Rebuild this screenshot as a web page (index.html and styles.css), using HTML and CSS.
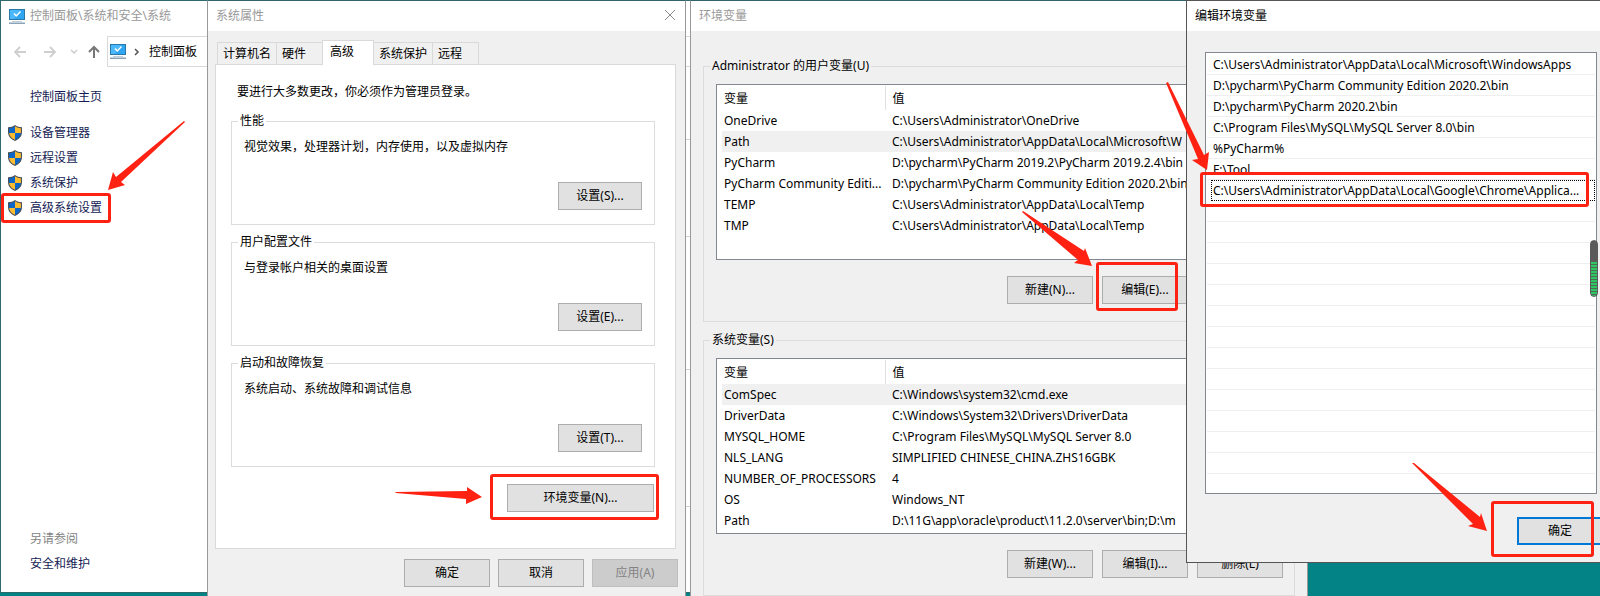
FILE: index.html
```
<!DOCTYPE html>
<html lang="zh-CN">
<head>
<meta charset="utf-8">
<title>环境变量</title>
<link rel="stylesheet" href="styles.css">
</head>
<body>
<svg class="defs" aria-hidden="true">
  <symbol id="monitor" viewBox="0 0 16 15">
    <rect x="0" y="0" width="16" height="11" fill="#2a78a8"/>
    <rect x="1" y="1" width="14" height="9" fill="#2ea6f2"/>
    <path d="M1 10V1H11L5 10Z" fill="#4ab8fa"/>
    <path d="M5 4.500L7.300 7L11.500 2.500" fill="none" stroke="#fff" stroke-width="1.500"/>
    <rect x="3" y="12" width="10" height="1" fill="#c3d0da"/>
    <rect x="0" y="13.500" width="16" height="1.500" fill="#8aa3b8"/>
  </symbol>
  <symbol id="shield" viewBox="0 0 14 16">
    <path d="M7 0C5 1.500 3 2.200 0 2.300V7C0 11.500 3 14.300 7 16C11 14.300 14 11.500 14 7V2.300C11 2.200 9 1.500 7 0Z" fill="#4a5058"/>
    <path d="M7 1.300C5.200 2.500 3.500 3.100 1.100 3.300V8H7Z" fill="#0b66c8"/>
    <path d="M7 1.300C8.800 2.500 10.500 3.100 12.900 3.300V8H7Z" fill="#fdbb30"/>
    <path d="M1.100 8C1.500 11.500 4 13.500 7 14.800V8Z" fill="#fdbb30"/>
    <path d="M12.900 8C12.500 11.500 10 13.500 7 14.800V8Z" fill="#0b66c8"/>
  </symbol>
</svg>
<main class="desktop">
  <section class="window control-panel">
    <header class="titlebar with-icon"><svg class="pc"><use href="#monitor"/></svg>控制面板\系统和安全\系统</header>
    <nav class="navbar">
      <svg class="nav-arrows" viewBox="0 0 92 16" fill="none">
        <path d="M13 8H2M7 3L2 8L7 13" stroke="#cfcfcf" stroke-width="1.800"/>
        <path d="M31 8H42M37 3L42 8L37 13" stroke="#cfcfcf" stroke-width="1.800"/>
        <path d="M58 6L61 9L64 6" stroke="#cbcbcb" stroke-width="1.500"/>
        <path d="M81 14V3M76 8L81 3L86 8" stroke="#777" stroke-width="2"/>
      </svg>
      <div class="address"><svg class="pc"><use href="#monitor"/></svg><svg class="chev" viewBox="0 0 6 8"><path d="M1 1L4 4L1 7" fill="none" stroke="#555" stroke-width="1.500"/></svg>控制面板</div>
    </nav>
    <div class="panel-body">
      <div class="side">
        <a class="home" href="#">控制面板主页</a>
        <a href="#"><svg><use href="#shield"/></svg>设备管理器</a>
        <a href="#"><svg><use href="#shield"/></svg>远程设置</a>
        <a href="#"><svg><use href="#shield"/></svg>系统保护</a>
        <a href="#"><svg><use href="#shield"/></svg>高级系统设置</a>
        <div class="see-also"><span>另请参阅</span><a href="#">安全和维护</a></div>
      </div>
      <div class="sections"><div></div><div></div><div></div><div></div></div>
    </div>
  </section>

  <section class="window properties">
    <header class="titlebar">系统属性
      <button class="close" aria-label="关闭"><svg viewBox="0 0 12 12"><path d="M1 1L11 11M11 1L1 11" stroke="#8a8a8a"/></svg></button>
    </header>
    <div class="tabs">
      <button>计算机名</button><button>硬件</button><button class="active">高级</button><button>系统保护</button><button>远程</button>
    </div>
    <div class="tab-panel">
      <p class="note">要进行大多数更改，你必须作为管理员登录。</p>
      <fieldset class="group"><legend>性能</legend><p>视觉效果，处理器计划，内存使用，以及虚拟内存</p><button class="btn">设置(S)...</button></fieldset>
      <fieldset class="group"><legend>用户配置文件</legend><p>与登录帐户相关的桌面设置</p><button class="btn">设置(E)...</button></fieldset>
      <fieldset class="group"><legend>启动和故障恢复</legend><p>系统启动、系统故障和调试信息</p><button class="btn">设置(T)...</button></fieldset>
      <button class="btn env">环境变量(N)...</button>
    </div>
    <footer class="actions"><button class="btn">确定</button><button class="btn">取消</button><button class="btn" disabled>应用(A)</button></footer>
  </section>

  <section class="window variables">
    <header class="titlebar">环境变量</header>
    <fieldset class="vars"><legend>Administrator 的用户变量(U)</legend>
      <div class="list">
        <table>
          <thead><tr><th>变量</th><th>值</th></tr></thead>
          <tbody>
            <tr><td>OneDrive</td><td>C:\Users\Administrator\OneDrive</td></tr>
            <tr class="selected"><td>Path</td><td>C:\Users\Administrator\AppData\Local\Microsoft\W</td></tr>
            <tr><td>PyCharm</td><td>D:\pycharm\PyCharm 2019.2\PyCharm 2019.2.4\bin</td></tr>
            <tr><td>PyCharm Community Editi...</td><td>D:\pycharm\PyCharm Community Edition 2020.2\bin</td></tr>
            <tr><td>TEMP</td><td>C:\Users\Administrator\AppData\Local\Temp</td></tr>
            <tr><td>TMP</td><td>C:\Users\Administrator\AppData\Local\Temp</td></tr>
          </tbody>
        </table>
      </div>
      <div class="row-buttons"><button class="btn">新建(N)...</button><button class="btn">编辑(E)...</button><button class="btn">删除(D)</button></div>
    </fieldset>
    <fieldset class="vars"><legend>系统变量(S)</legend>
      <div class="list">
        <table>
          <thead><tr><th>变量</th><th>值</th></tr></thead>
          <tbody>
            <tr class="selected"><td>ComSpec</td><td>C:\Windows\system32\cmd.exe</td></tr>
            <tr><td>DriverData</td><td>C:\Windows\System32\Drivers\DriverData</td></tr>
            <tr><td>MYSQL_HOME</td><td>C:\Program Files\MySQL\MySQL Server 8.0</td></tr>
            <tr><td>NLS_LANG</td><td>SIMPLIFIED CHINESE_CHINA.ZHS16GBK</td></tr>
            <tr><td>NUMBER_OF_PROCESSORS</td><td>4</td></tr>
            <tr><td>OS</td><td>Windows_NT</td></tr>
            <tr><td>Path</td><td>D:\11G\app\oracle\product\11.2.0\server\bin;D:\m</td></tr>
          </tbody>
        </table>
      </div>
      <div class="row-buttons"><button class="btn">新建(W)...</button><button class="btn">编辑(I)...</button><button class="btn">删除(L)</button></div>
    </fieldset>
  </section>

  <section class="window editor">
    <header class="titlebar">编辑环境变量</header>
    <ul class="paths">
      <li>C:\Users\Administrator\AppData\Local\Microsoft\WindowsApps</li>
      <li>D:\pycharm\PyCharm Community Edition 2020.2\bin</li>
      <li>D:\pycharm\PyCharm 2020.2\bin</li>
      <li>C:\Program Files\MySQL\MySQL Server 8.0\bin</li>
      <li>%PyCharm%</li>
      <li>F:\Tool</li>
      <li class="focused">C:\Users\Administrator\AppData\Local\Google\Chrome\Applica...</li>
      <li></li><li></li><li></li><li></li><li></li><li></li><li></li><li></li><li></li><li></li><li></li><li></li><li></li>
    </ul>
    <button class="btn ok">确定</button>
  </section>

  <div class="meter"></div>
  <svg class="marks" viewBox="0 0 1600 596" aria-hidden="true">
    <g fill="none" stroke="#ff2212" stroke-width="3">
      <rect x="2.500" y="194.500" width="107" height="27" rx="1.500"/>
      <rect x="491.500" y="475.500" width="166" height="43" rx="1.500"/>
      <rect x="1097.500" y="263.500" width="79" height="46" rx="1.500"/>
      <rect x="1201.500" y="173.500" width="386" height="32" rx="1.500"/>
      <rect x="1492.500" y="502.500" width="100" height="53" rx="1.500"/>
    </g>
    <g fill="#ff2212">
      <path d="M185 122L121 182L125 185L108 190L113 172L116 177L184 121Z"/>
      <path d="M395 492L467 491V487L482 497L466 504V499L396 493Z"/>
      <path d="M1023 211L1084 251L1085 248L1092 266L1074 263L1078 260L1022 212Z"/>
      <path d="M1168 82L1204 155L1209 152L1207 170L1192 160L1198 159L1166 83Z"/>
      <path d="M1414 463L1480 517L1481 513L1487 531L1468 526L1473 524L1412 463Z"/>
    </g>
  </svg>
</main>
</body>
</html>
```
FILE: styles.css
```
* { box-sizing: border-box; }
body { margin: 0; font: 12px/20px "Noto Sans", "Noto Sans CJK SC", sans-serif; color: #000; }
button { font: inherit; color: inherit; }
a { color: #151c55; text-decoration: none; }
p, ul { margin: 0; padding: 0; }
.defs { position: absolute; width: 0; height: 0; }
.desktop { position: relative; height: 100vh; min-height: 596px; overflow: hidden; background: #048387; }

.window { position: absolute; top: 0; background: #f0f0f0; border: 1px solid #999; border-top-color: #2f6468; }
.titlebar { display: flex; align-items: center; height: 30px; padding-left: 8px; background: #fff; color: #999; }
.btn { height: 28px; padding: 0; background: #e1e1e1; border: 1px solid #adadad; line-height: 20px; }
.btn:disabled { background: #ccc; border-color: #bfbfbf; color: #838383; }

.control-panel { left: 0; width: 700px; height: 593px; background: #fff; border-color: #2c6a6e; display: flex; flex-direction: column; }
.with-icon { gap: 5px; }
.pc { width: 16px; height: 15px; }
.navbar { display: flex; align-items: center; height: 41px; }
.nav-arrows { width: 92px; height: 16px; margin-left: 12px; }
.address { display: flex; align-items: center; flex: 1; height: 31px; margin-left: 2px; padding-left: 2px; border: 1px solid #d9d9d9; }
.chev { width: 6px; height: 8px; margin: 0 9px 0 8px; }
.panel-body { display: flex; flex: 1; }
.side { display: flex; flex-direction: column; width: 220px; padding: 12px 7px 16px; line-height: 25px; }
.side > a { display: flex; align-items: center; gap: 8px; height: 25px; }
.side svg { width: 14px; height: 16px; }
.side > .home { padding-left: 22px; margin-bottom: 11px; }
.see-also { display: flex; flex-direction: column; margin-top: auto; padding-left: 22px; color: #838383; }
.sections { flex: 1; display: grid; grid-template-rows: 97px 133px 137px 1fr; padding-top: 67px; }
.sections div { border-top: 1px solid #d0d0d0; }

.properties { left: 207px; width: 479px; height: 600px; }
.close { margin-left: auto; margin-right: 7px; padding: 0; border: 0; background: none; width: 14px; height: 14px; display: flex; }
.close svg { width: 12px; height: 12px; }
.tabs { display: flex; align-items: flex-end; height: 34px; padding-left: 9px; }
.tabs button { position: relative; height: 23px; padding: 0 16px 0 5px; margin-right: -1px; background: #f0f0f0; border: 1px solid #d9d9d9; }
.tabs button:nth-child(1), .tabs button:nth-child(4) { padding-right: 5px; }
.tabs button.active { height: 25px; padding: 0 19px 2px 7px; background: #fff; border-bottom: 0; z-index: 1; }
.tab-panel { display: flex; flex-direction: column; height: 485px; margin: -1px 9px 0 7px; padding: 17px 20px 0 15px; background: #fff; border: 1px solid #d9d9d9; }
.note { margin: 0 6px 10px; }
.group { display: flex; flex-direction: column; margin: 0 0 8px; padding: 7px 12px 12px; border: 1px solid #dcdcdc; height: 113px; min-width: 0; }
.group legend, .vars legend { padding: 0 2px; line-height: 18px; }
.group legend { margin-left: -6px; }
.group .btn { width: 84px; margin: 25px 0 0 auto; }
.env { width: 147px; margin: 9px 1px 0 auto; flex-shrink: 0; }
.actions { display: flex; justify-content: flex-end; gap: 8px; padding: 10px 7px; }
.actions .btn { width: 86px; }

.variables { left: 690px; width: 618px; height: 610px; }
.variables .titlebar { margin-bottom: 26px; }
.vars { height: 265px; margin: 0 12px 9px; padding: 9px 11px 0 12px; border: 1px solid #dcdcdc; min-width: 0; }
.vars legend { margin-left: -6px; }
.list { height: 176px; padding: 1px 1px 0 5px; background: #fff; border: 1px solid #828790; }
table { width: 100%; table-layout: fixed; border-collapse: collapse; }
th, td { height: 21px; padding: 0 0 0 7px; line-height: 21px; text-align: left; font-weight: normal; white-space: nowrap; overflow: hidden; }
th:first-child, td:first-child { padding-left: 2px; }
th { height: 24px; }
th:first-child { width: 163px; border-right: 1px solid #e0e0e0; }
.selected { background: #f0f0f0; }
.row-buttons { display: flex; justify-content: flex-end; gap: 9px; padding-top: 16px; }
.row-buttons .btn { width: 86px; }

.editor { left: 1186px; width: 430px; height: 563px; border-color: #555; }
.editor .titlebar { color: #000; }
.paths { width: 392px; height: 442px; margin: 21px 0 23px 18px; padding: 1px; overflow: hidden; background: #fff; border: 1px solid #828790; list-style: none; }
.paths li { height: 21px; padding: 0 0 0 6px; border-bottom: 1px solid #efefef; line-height: 22px; white-space: nowrap; }
.paths .focused { margin-left: 4px; padding-left: 1px; border: 1px dotted #000; line-height: 20px; }
.ok { display: block; width: 86px; margin-left: 330px; border: 2px solid #0078d7; }

.meter { position: absolute; right: 2px; top: 240px; width: 8px; height: 57px; border: 1px solid #5a5a5a; border-radius: 4px; background: linear-gradient(#5a5a5a 21px, transparent 21px), repeating-linear-gradient(#2fc763 0 2px, #4c6c56 2px 3px); }
.marks { position: absolute; left: 0; top: 0; width: 1600px; height: 596px; pointer-events: none; }
```
